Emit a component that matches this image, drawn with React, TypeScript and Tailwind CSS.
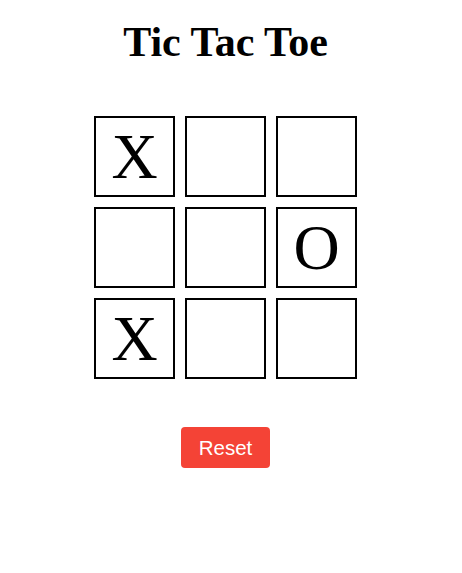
import React, { useState } from 'react';

type Mark = 'X' | 'O' | null;

const initialBoard: Mark[] = ['X', null, null, null, null, 'O', 'X', null, null];

export default function App() {
  const [board, setBoard] = useState<Mark[]>(initialBoard);

  return (
    <div className="w-[451px] flex flex-col items-center bg-white">
      <h1 className="mt-[19px] text-[42px] leading-[47px] font-bold text-black font-['Liberation_Serif',serif]">
        Tic Tac Toe
      </h1>
      {/* board */}
      <div className="mt-[50px] grid grid-cols-[repeat(3,81px)] grid-rows-[repeat(3,81px)] gap-[10px]">
        {board.map((cell, i) => (
          <div
            key={i}
            className="flex items-center justify-center border-2 border-black bg-white text-[64px] leading-none text-black font-['Liberation_Serif',serif]"
          >
            {cell}
          </div>
        ))}
      </div>
      <button
        type="button"
        onClick={() => setBoard(Array(9).fill(null))}
        className="mt-[48px] rounded px-[18px] py-[10px] bg-[#f44336] text-white text-[20.5px] leading-[21px] font-['Liberation_Sans',Arial,sans-serif]"
      >
        Reset
      </button>
    </div>
  );
}
